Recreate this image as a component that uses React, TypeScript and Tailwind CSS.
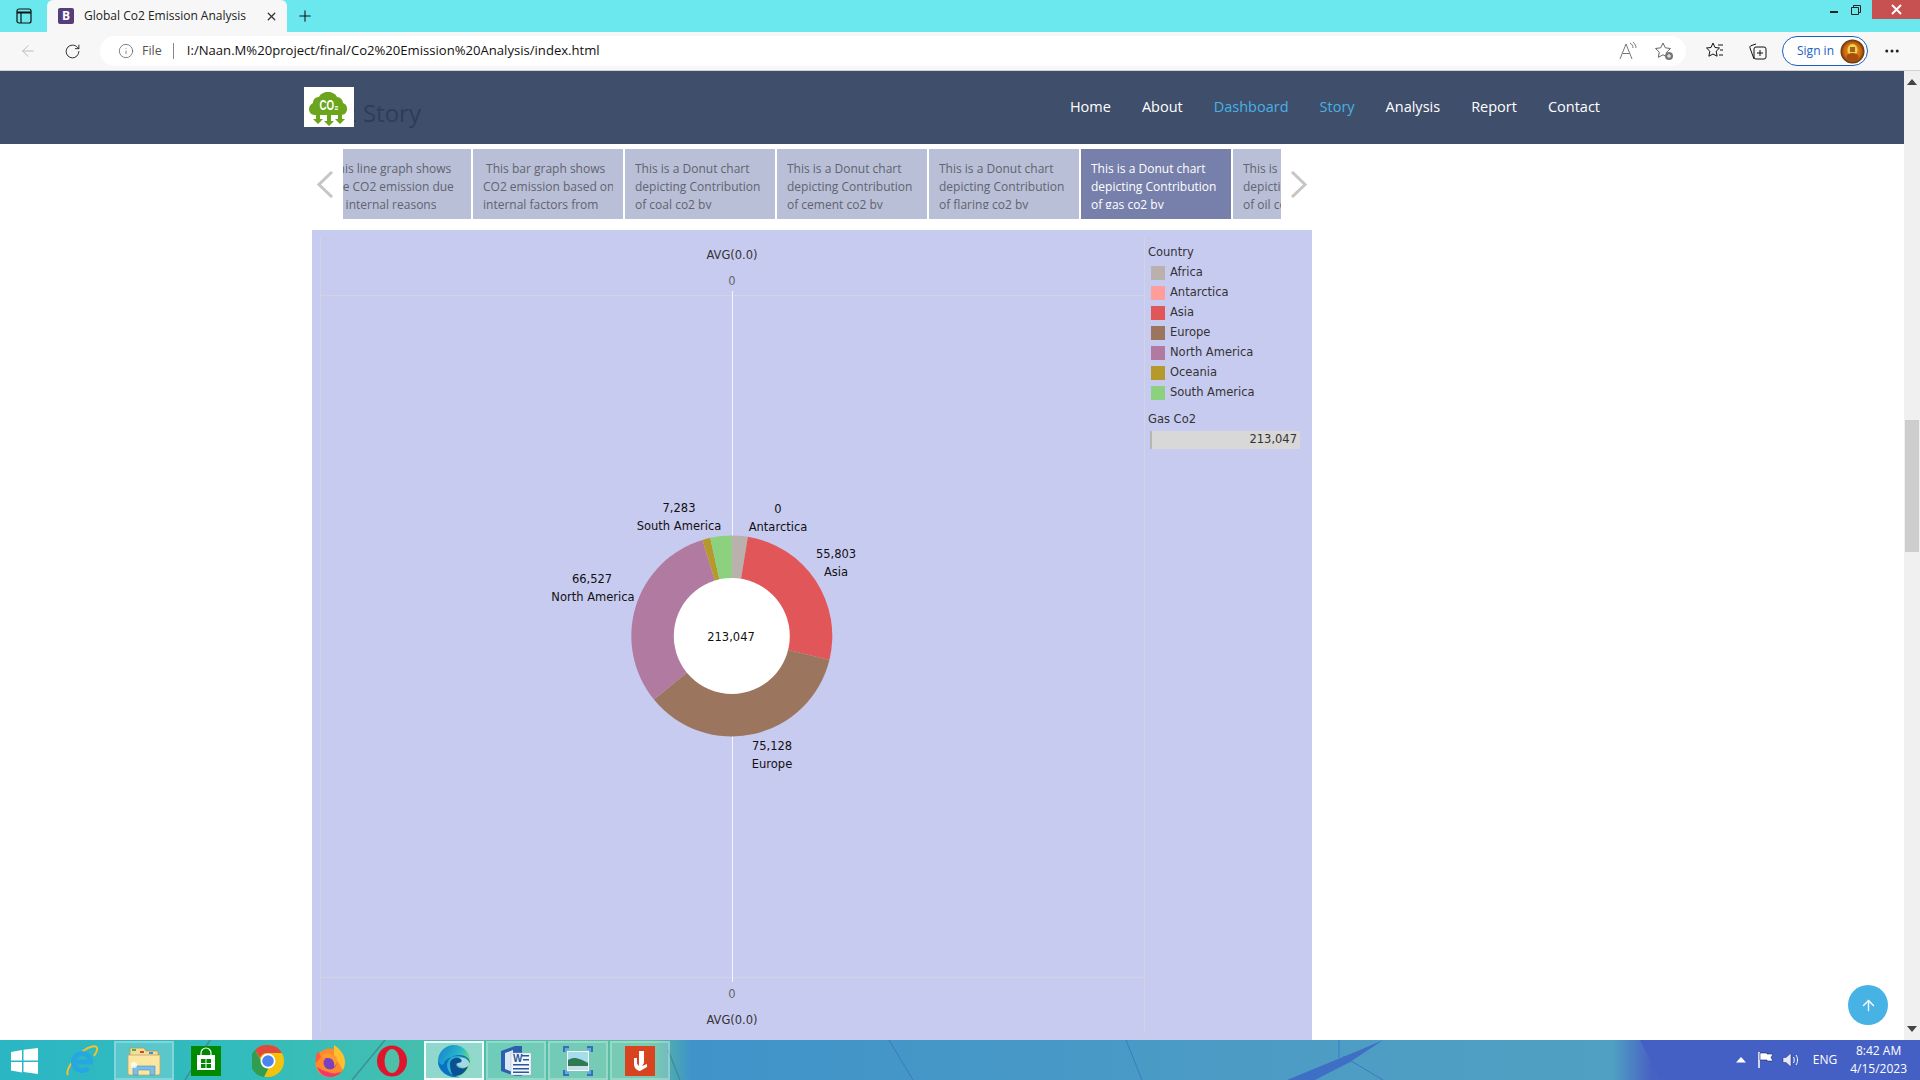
import { ArrowLeft, ArrowUp, Info, MoreHorizontal, Plus, RotateCw, X } from "lucide-react";

const NAV_LINKS = [
  { label: "Home" },
  { label: "About" },
  { label: "Dashboard", active: true },
  { label: "Story", active: true },
  { label: "Analysis" },
  { label: "Report" },
  { label: "Contact" },
];

const STORY_POINTS = [
  { lines: ["This line graph shows", "the CO2 emission due", "to internal reasons"] },
  { lines: ["\u00a0This bar graph shows", "CO2 emission based on", "internal factors from"] },
  { lines: ["This is a Donut chart", "depicting Contribution", "of coal co2 by"] },
  { lines: ["This is a Donut chart", "depicting Contribution", "of cement co2 by"] },
  { lines: ["This is a Donut chart", "depicting Contribution", "of flaring co2 by"] },
  { lines: ["This is a Donut chart", "depicting Contribution", "of gas co2 by"], active: true },
  { lines: ["This is a Donut chart", "depicting Contribution", "of oil co2 by"] },
];

const LEGEND = [
  { label: "Africa", swatch: "bg-[#bab0ac]" },
  { label: "Antarctica", swatch: "bg-[#ff9d9a]" },
  { label: "Asia", swatch: "bg-[#e15759]" },
  { label: "Europe", swatch: "bg-[#9c755f]" },
  { label: "North America", swatch: "bg-[#b07aa1]" },
  { label: "Oceania", swatch: "bg-[#b6992d]" },
  { label: "South America", swatch: "bg-[#8cd17d]" },
];

const SLICES = [
  { from: 0, to: 9.2, color: "#bab0ac" },
  { from: 9.2, to: 103.8, color: "#e15759" },
  { from: 103.8, to: 230.8, color: "#9c755f" },
  { from: 230.8, to: 343, color: "#b07aa1" },
  { from: 343, to: 347.6, color: "#b6992d" },
  { from: 347.6, to: 360, color: "#8cd17d" },
];

const CHART_LABELS = [
  { x: 679, y: 508, text: "7,283" },
  { x: 679, y: 526, text: "South America" },
  { x: 778, y: 509, text: "0" },
  { x: 778, y: 527, text: "Antarctica" },
  { x: 836, y: 554, text: "55,803" },
  { x: 836, y: 572, text: "Asia" },
  { x: 592, y: 579, text: "66,527" },
  { x: 593, y: 597, text: "North America" },
  { x: 731, y: 637, text: "213,047" },
  { x: 772, y: 746, text: "75,128" },
  { x: 772, y: 764, text: "Europe" },
];

function polar(cx: number, cy: number, r: number, deg: number) {
  const a = ((deg - 90) * Math.PI) / 180;
  return `${cx + r * Math.cos(a)} ${cy + r * Math.sin(a)}`;
}

function slicePath(from: number, to: number) {
  const large = to - from > 180 ? 1 : 0;
  return `M731.800 636 L${polar(731.8, 636, 100.5, from)} A100.500 100.500 0 ${large} 1 ${polar(731.8, 636, 100.5, to)} Z`;
}

function Co2Logo() {
  return (
    <svg width="50" height="40" viewBox="0 0 50 40" className="relative z-10 -mt-px shrink-0 bg-white">
      <path
        d="M11 28c-4 0-6-3-6-6 0-3 2-5 4-6 0-4 3-6 6-6 1-3 5-5 9-5 4 0 8 2 9 5 3 0 6 3 6 6 3 1 4 3 4 6 0 3-2 6-6 6z"
        fill="#6aa51b"
      />
      <text x="25" y="23" textAnchor="middle" fontSize="14" fontWeight="700" fill="#fff" fontFamily="Liberation Sans" textLength="19" lengthAdjust="spacingAndGlyphs">
        CO₂
      </text>
      <path d="M12 28h4v4h3l-5 5-5-5h3zM23 28h4v6h3l-5 5-5-5h3zM34 28h4v4h3l-5 5-5-5h3z" fill="#6aa51b" />
    </svg>
  );
}

function IeIcon() {
  return (
    <svg width="32" height="32" viewBox="0 0 32 32">
      <path d="M2 30C-1 26 8 12 17 6c7-5 13-6 14-3 1 2-1 5-3 8" fill="none" stroke="#f2c230" strokeWidth="2" />
      <path d="M8 17h16.500a8.500 8.500 0 1 0-2.500 6" fill="none" stroke="#27a7e0" strokeWidth="5" />
    </svg>
  );
}

function FolderIcon() {
  return (
    <svg width="34" height="30" viewBox="0 0 34 30">
      <path d="M3 2h14l2 3h12v6H3z" fill="#f3dd97" stroke="#b3975a" strokeWidth="0.8" />
      <rect x="5" y="3" width="4" height="2" fill="#4fae4a" />
      <rect x="13" y="5" width="4" height="2" fill="#d6472f" />
      <rect x="22" y="6" width="4" height="2" fill="#3f8fd8" />
      <path d="M1 9h32v18a2 2 0 0 1-2 2H3a2 2 0 0 1-2-2z" fill="#fbe7a2" stroke="#c2a464" strokeWidth="0.8" />
      <path d="M6 29v-9h22v9h-5v-5H11v5z" fill="#79bfe6" stroke="#4f8fc0" strokeWidth="0.6" />
      <circle cx="7" cy="19" r="3" fill="#fff" opacity="0.85" />
    </svg>
  );
}

function StoreIcon() {
  return (
    <svg width="30" height="30" viewBox="0 0 30 30">
      <rect width="30" height="30" fill="#008a00" />
      <path d="M10 10V7a5 5 0 0 1 10 0v3" fill="none" stroke="#fff" strokeWidth="1.2" />
      <path d="M6 9h18v15H6z" fill="#fff" />
      <path d="M10 13h4.500v4H10zM15.500 13H20v4h-4.500zM10 18h4.500v4H10zM15.500 18H20v4h-4.500z" fill="#008a00" />
    </svg>
  );
}

function ChromeIcon() {
  return (
    <svg width="32" height="32" viewBox="0 0 32 32">
      <circle cx="16" cy="16" r="16" fill="#f4c20d" />
      <path d="M16 0a16 16 0 0 1 14 8H16a8 8 0 0 0-8 5L3 5a16 16 0 0 1 13-5z" fill="#de4a3c" />
      <path d="M3 5l8 14a6 6 0 0 0 6 3l-5 10A16 16 0 0 1 3 5z" fill="#2f9e4f" />
      <circle cx="16" cy="16" r="7.500" fill="#fff" />
      <circle cx="16" cy="16" r="5.800" fill="#4a84ee" />
    </svg>
  );
}

function FirefoxIcon() {
  return (
    <svg width="32" height="32" viewBox="0 0 32 32">
      <circle cx="16" cy="18" r="14.500" fill="#ff8a2b" />
      <path d="M20 0c6 4 11 10 11 17 0 3-1 6-2 8L20 10z" fill="#ffc02e" />
      <path d="M4 6l3 6-5 6c-1-4 0-9 2-12z" fill="#ff5a3c" />
      <path d="M3 22c2 6 7 10 13 10 5 0 9-2 12-6-4 3-10 3-14 1-4-1-8-3-11-5z" fill="#f0386b" />
      <circle cx="16" cy="18" r="6.500" fill="#7b3fc4" />
      <path d="M8 11c4-4 12-3 15 2 1 5-2 8-3 9 1-4-1-9-6-9-2 0-4 0-6-2z" fill="#ff9a2e" />
    </svg>
  );
}

function OperaIcon() {
  return (
    <svg width="32" height="32" viewBox="0 0 32 32">
      <ellipse cx="16" cy="16" rx="15" ry="15.500" fill="#e0142b" />
      <ellipse cx="16" cy="16" rx="7.500" ry="12" fill="#4fc0a8" />
    </svg>
  );
}

function EdgeIcon() {
  return (
    <svg width="34" height="34" viewBox="0 0 34 34">
      <defs>
        <linearGradient id="edgeTop" x1="0" y1="0" x2="1" y2="0.600">
          <stop offset="0" stopColor="#0f7fd0" />
          <stop offset="0.600" stopColor="#2bb8c8" />
          <stop offset="1" stopColor="#7fe36a" />
        </linearGradient>
      </defs>
      <circle cx="17" cy="17" r="16" fill="url(#edgeTop)" />
      <path d="M33 19c0-5-5-8-11-8-7 0-12 5-12 10 0 7 6 12 13 12-11 2-22-6-22-16 2 5 6 4 6 2 3-8 22-10 26 0z" fill="#0b6fc2" />
      <path d="M13 20c0-5 5-7 9-6 4 1 3 5-1 5-3 0-2 4 2 5 3 1 6 0 8-2-2 6-7 10-13 10-4 0-5-8-5-12z" fill="#0d4f96" />
      <path d="M22 14c4 1 4 5 0 5-3 0-2 3 2 4 3 1 6 0 8-2 1-4-5-8-10-7z" fill="#a8d4ec" />
    </svg>
  );
}

function WordIcon() {
  return (
    <svg width="32" height="32" viewBox="0 0 32 32">
      <path d="M1 6l14-5h7v30h-7L1 26z" fill="#2c5fae" />
      <path d="M5 8l8-3v22l-8-3z" fill="#dce8f6" />
      <path d="M11 8h20v22H11z" fill="#f4f7fb" stroke="#a9b8cc" strokeWidth="0.5" />
      <text x="13" y="17" fontSize="10" fontWeight="700" fill="#2b579a" fontFamily="Liberation Sans">W</text>
      <path d="M22 10h7v1.500h-7zM23 14h6v1.500h-6zM13 19h16v1.500H13zM13 23h16v1.500H13zM13 26.500h16V28H13z" fill="#2b579a" />
    </svg>
  );
}

function PhotoIcon() {
  return (
    <svg width="30" height="30" viewBox="0 0 30 30">
      <path d="M0 0h6v2H2v4H0zM24 0h6v6h-2V2h-4zM0 24h2v4h4v2H0zM28 24h2v6h-6v-2h4z" fill="#2f74b8" />
      <path d="M2 2h4v2H4v2H2zM24 2h4v4h-2V4h-2zM2 24h2v2h2v2H2zM26 24h2v4h-4v-2h2z" fill="#6aa6d8" />
      <rect x="4" y="5" width="22" height="20" fill="#f6fbff" />
      <rect x="5" y="6" width="20" height="18" fill="#a6dcec" />
      <path d="M5 14c5-3 9-3 20 3v3H5z" fill="#2f7a52" />
      <path d="M5 20h20v4H5z" fill="#c9dfe8" />
    </svg>
  );
}

function RedAppIcon() {
  return (
    <svg width="30" height="30" viewBox="0 0 30 30">
      <rect width="30" height="30" fill="#d8441f" />
      <path d="M9 12h3v5c0 1 1 2 2 3V5h5v12l-2 3 5-2v3l-7 4h-1c-2-1-5-3-5-7z" fill="#fff" />
    </svg>
  );
}

function TaskTile({ children, state }: { children: React.ReactNode; state?: "open" | "active" }) {
  const style =
    state === "active"
      ? "border-2 border-white/90 bg-white/40"
      : state === "open"
        ? "border-2 border-white/25 bg-white/20"
        : "";
  return <div className={`flex h-[39px] w-[60px] items-center justify-center ${style}`}>{children}</div>;
}

function TitleBar() {
  return (
    <div className="flex h-8 shrink-0 items-start bg-[#6ae8ee]">
      <div className="flex h-8 w-[47px] items-center justify-center">
        <svg width="16" height="16" viewBox="0 0 16 16" fill="none" stroke="#111" strokeWidth="1.200">
          <rect x="1" y="1" width="14" height="14" rx="2" />
          <path d="M1 4.500h14" strokeWidth="2" />
          <path d="M5 4.500V15" />
        </svg>
      </div>
      <div className="flex h-8 w-[240px] items-center rounded-t-md bg-[#f7f7f7] pl-[11px] pr-2">
        <div className="flex h-4 w-4 items-center justify-center rounded-[2px] bg-[#563d7c] text-[12px] font-bold leading-none text-white">
          B
        </div>
        <span className="ml-[10px] flex-1 whitespace-nowrap text-[12px] text-[#222]">Global Co2 Emission Analysis</span>
        <X size={13} strokeWidth={2.4} className="mr-px text-[#333]" />
      </div>
      <div className="flex h-8 w-9 items-center justify-center">
        <Plus size={18} strokeWidth={1.4} className="text-[#111]" />
      </div>
      <div className="ml-auto flex h-[19px] shrink-0 items-stretch">
        <div className="flex w-[50px] items-center pl-[8px]">
          <div className="mt-[5px] h-[2px] w-2 bg-[#222]" />
          <svg width="10" height="10" viewBox="0 0 10 10" fill="none" stroke="#222" className="ml-[13px]">
            <path d="M.500 2.500h7v7h-7zM2.500 2.500V.500h7v7h-2" />
          </svg>
        </div>
        <div className="flex w-[48px] items-center justify-center bg-[#c75050]">
          <svg width="11" height="11" viewBox="0 0 11 11" fill="none" stroke="#fff" strokeWidth="2">
            <path d="m1 1 9 9M10 1l-9 9" />
          </svg>
        </div>
      </div>
    </div>
  );
}

function AddressBar() {
  return (
    <div className="flex h-[39px] shrink-0 items-center border-b border-[#d2d2d2] bg-[#f7f7f7]">
      <div className="flex w-[100px] items-center pl-[19px]">
        <ArrowLeft size={18} strokeWidth={1.2} className="text-[#b5b5b5]" />
        <RotateCw size={17} strokeWidth={1.3} className="ml-[27px] text-[#222]" />
      </div>
      <div className="flex h-[30px] w-[1586px] items-center rounded-full bg-white pl-[18px] pr-[12px]">
        <Info size={16} strokeWidth={1.2} className="text-[#666]" />
        <span className="ml-[8px] text-[12.500px] text-[#555]">File</span>
        <div className="ml-[11px] h-[16px] w-px bg-[#888]" />
        <span className="ml-[13px] whitespace-nowrap text-[13.100px] text-[#111]">
          I:/Naan.M%20project/final/Co2%20Emission%20Analysis/index.html
        </span>
        <div className="flex-1" />
        <svg width="22" height="20" viewBox="0 0 22 20" fill="none" stroke="#777" strokeWidth="1">
          <path d="M2 18 8 3l6 15M4.500 12.500h7" />
          <path d="M12 2c2 1 3 3 3 5M15 1c2 2 3 4 3 6" />
        </svg>
        <svg width="20" height="20" viewBox="0 0 20 20" className="ml-[14px]" fill="none" stroke="#666" strokeWidth="1">
          <path d="m9 2 2.300 4.800 5.200.7-3.800 3.600 1 5.200L9 13.800l-4.700 2.500 1-5.200L1.500 7.500l5.200-.7z" />
          <circle cx="15" cy="15" r="4" fill="#777" stroke="none" />
          <path d="M15 13v4M13 15h4" stroke="#fff" />
        </svg>
      </div>
      <svg width="20" height="20" viewBox="0 0 20 20" className="ml-[19px]" fill="none" stroke="#111" strokeWidth="1">
        <path d="m8 2 2 4.500 4.500.5-3.300 3.200.9 5L8 13l-4.100 2.200.9-5L1.500 7 6 6.500zM13 4h5M15 9h3M14 14h4" />
      </svg>
      <svg width="20" height="20" viewBox="0 0 20 20" className="ml-[23px]" fill="none" stroke="#111" strokeWidth="1">
        <path d="M6 18 2 7c-.4-1 .2-2 1-2.300L8 3" />
        <rect x="6" y="6" width="12" height="12" rx="2" />
        <path d="M12 9v6M9 12h6" />
      </svg>
      <div className="ml-[14px] flex h-[30px] w-[86px] items-center justify-between rounded-full border border-[#1a5fc4] bg-white pl-[14px] pr-[2px]">
        <span className="whitespace-nowrap text-[12px] text-[#1a5fc4]">Sign in</span>
        <svg width="25" height="25" viewBox="0 0 25 25">
          <defs>
            <radialGradient id="avatarGlow" cx="0.500" cy="0.500" r="0.550">
              <stop offset="0" stopColor="#f2a52a" />
              <stop offset="0.650" stopColor="#c9680f" />
              <stop offset="1" stopColor="#3a1c0a" />
            </radialGradient>
          </defs>
          <circle cx="12.500" cy="12.500" r="12" fill="url(#avatarGlow)" />
          <ellipse cx="12.500" cy="11" rx="5" ry="6" fill="#f6d04d" />
          <ellipse cx="12.500" cy="18" rx="6" ry="4" fill="#a84d10" />
          <path d="M10 8h5v5h-5z" fill="#7c3408" opacity="0.700" />
        </svg>
      </div>
      <MoreHorizontal size={18} className="ml-[15px] text-[#222]" />
    </div>
  );
}

function SiteNav() {
  return (
    <header className="flex h-[73px] items-center justify-between bg-[#3f4e6b] pl-[304px] pr-[304px] font-['Open_Sans',sans-serif]">
      <div className="flex items-center">
        <Co2Logo />
        <span className="-ml-[11px] mt-[11px] whitespace-nowrap text-[24px] leading-none text-[#2f3c58]">2 Story</span>
      </div>
      <nav className="flex items-center gap-[31px] text-[14.500px] leading-none">
        {NAV_LINKS.map((link) => (
          <a key={link.label} className={link.active ? "text-[#47b2e4]" : "text-white"}>
            {link.label}
          </a>
        ))}
      </nav>
    </header>
  );
}

function StoryCarousel() {
  return (
    <div className="flex h-[70px] items-center pl-[312px]">
      <div className="flex w-[31px] justify-center pr-[5px]">
        <svg width="17" height="27" viewBox="0 0 17 27" fill="none" stroke="#c6c6c6" strokeWidth="3">
          <path d="M15 1 2 13.500 15 26" />
        </svg>
      </div>
      <div className="w-[938px] overflow-hidden">
        <div className="-ml-[22px] flex gap-[2px]">
          {STORY_POINTS.map((point, i) => (
            <div
              key={i}
              className={`h-[70px] w-[150px] shrink-0 px-[10px] pt-[11px] ${
                point.active ? "bg-[#777fab] text-white" : "bg-[#b9bfd6] text-[#5f6470]"
              }`}
            >
              <div className="h-[49px] overflow-hidden text-[12px] leading-[18px]">
                {point.lines.map((line) => (
                  <div key={line} className="whitespace-nowrap">
                    {line}
                  </div>
                ))}
              </div>
            </div>
          ))}
        </div>
      </div>
      <div className="flex w-[31px] justify-center pl-[4px]">
        <svg width="17" height="27" viewBox="0 0 17 27" fill="none" stroke="#c6c6c6" strokeWidth="3">
          <path d="m2 1 13 12.500L2 26" />
        </svg>
      </div>
    </div>
  );
}

function DonutPlot() {
  return (
    <svg width="825" height="802" viewBox="320 238 825 802" className="shrink-0 text-[11.500px]">
      <path d="M320.500 238v795M1144.500 238v795M320 295.500h824M320 977.500h824" stroke="#d2d3e4" fill="none" />
      <path d="M732.500 291v691" stroke="#f4f5fc" fill="none" />
      {SLICES.map((s) => (
        <path key={s.color} d={slicePath(s.from, s.to)} fill={s.color} />
      ))}
      <circle cx="731.800" cy="636" r="58" fill="#fff" />
      <text x="732" y="255" textAnchor="middle" dominantBaseline="central" fill="#333">AVG(0.0)</text>
      <text x="732" y="281" textAnchor="middle" dominantBaseline="central" fill="#666">0</text>
      <text x="732" y="994" textAnchor="middle" dominantBaseline="central" fill="#666">0</text>
      <text x="732" y="1020" textAnchor="middle" dominantBaseline="central" fill="#333">AVG(0.0)</text>
      {CHART_LABELS.map((l) => (
        <text key={l.text} x={l.x} y={l.y} textAnchor="middle" dominantBaseline="central" fill="#111">
          {l.text}
        </text>
      ))}
    </svg>
  );
}

function ChartLegend() {
  return (
    <div className="flex-1 pl-[3px] pt-[5px] text-[11.500px] text-[#333]">
      <div className="mb-[2px] h-[18px] leading-[18px]">Country</div>
      {LEGEND.map((item) => (
        <div key={item.label} className="flex h-5 items-center pl-[3px]">
          <div className={`h-[14px] w-[14px] ${item.swatch}`} />
          <span className="ml-[5px] whitespace-nowrap">{item.label}</span>
        </div>
      ))}
      <div className="mt-[7px] h-[18px] leading-[18px]">Gas Co2</div>
      <div className="ml-[2px] mt-[3px] flex h-[18px] w-[150px] items-center justify-end border-l-2 border-[#b5b5b5] bg-[#d8d8d8] pr-[3px]">
        213,047
      </div>
    </div>
  );
}

function Taskbar() {
  return (
    <div className="relative flex h-10 shrink-0 items-center overflow-hidden bg-[linear-gradient(90deg,#2bb6c4_0%,#33bcbc_13%,#4cc0a8_26%,#58bda0_34%,#3f93c9_36%,#4a9ac6_60%,#50a0c2_84%,#4862c4_86%,#4560c4_100%)] font-['Open_Sans',sans-serif]">
      <svg width="1920" height="40" viewBox="0 0 1920 40" fill="none" className="absolute inset-0">
        <path d="M210 0 185 40M385 0 352 40M680 40 668 10" stroke="#3f8f93" strokeWidth="1.500" />
        <path d="M889 0 913 40M1126 0 1142 40M1339 0V18M1343 16 1383 40" stroke="#3f79c0" />
        <path d="M1287 40 1360 10 1383 0 1350 22 1315 40Z" fill="#3f6fc4" />
        <path d="M1640 0 1660 40H1920V0Z" fill="#4560c4" />
      </svg>
      <div className="relative flex h-full items-center pt-px">
        <div className="flex w-[52px] justify-center pr-[3px]">
          <svg width="27" height="26" viewBox="0 0 27 26" fill="#fff">
            <path d="M0 4l11-2v10.500H0zM12.500 1.700 27 0v12.500H12.500zM0 14h11v10.500l-11-2zM12.500 14H27v12l-14.500-2z" />
          </svg>
        </div>
        <div className="flex gap-[2px]">
          <TaskTile><IeIcon /></TaskTile>
          <TaskTile state="open"><FolderIcon /></TaskTile>
          <TaskTile><StoreIcon /></TaskTile>
          <TaskTile><ChromeIcon /></TaskTile>
          <TaskTile><FirefoxIcon /></TaskTile>
          <TaskTile><OperaIcon /></TaskTile>
          <TaskTile state="active"><EdgeIcon /></TaskTile>
          <TaskTile state="open"><WordIcon /></TaskTile>
          <TaskTile state="open"><PhotoIcon /></TaskTile>
          <TaskTile state="open"><RedAppIcon /></TaskTile>
        </div>
      </div>
      <div className="flex-1" />
      <div className="relative flex items-center pr-[13px] text-white">
        <svg width="10" height="6" viewBox="0 0 10 6" fill="#fff"><path d="M5 0l5 5.500H0z" /></svg>
        <svg width="18" height="18" viewBox="0 0 18 18" className="ml-[11px]">
          <path d="M2 1v16" stroke="#fff" strokeWidth="1.500" />
          <path d="M3 2h7v1h6l-2 3.500 2 3.500h-6v-1H3z" fill="#fff" stroke="#1d2a6b" strokeWidth="0.600" />
        </svg>
        <svg width="18" height="18" viewBox="0 0 18 18" className="ml-[7px]" fill="none" stroke="#fff">
          <path d="M1 6.500h3L9 2v14l-5-4.500H1z" fill="#e8e8f5" stroke="#1d2a6b" strokeWidth="0.500" />
          <path d="M11.500 6c1 2 1 4 0 6M14 4c2 3 2 7 0 10" />
        </svg>
        <span className="ml-[13px] text-[12px]">ENG</span>
        <div className="ml-[13px] flex flex-col items-center text-[12px] leading-[18px]">
          <span>8:42 AM</span>
          <span>4/15/2023</span>
        </div>
      </div>
    </div>
  );
}

export default function App() {
  return (
    <div className="flex h-screen w-screen flex-col overflow-hidden bg-white font-['Open_Sans',sans-serif]">
      <TitleBar />
      <AddressBar />
      <div className="relative flex min-h-0 flex-1">
        <div className="min-w-0 flex-1 overflow-hidden">
          <SiteNav />
          <div className="pt-[5px]">
            <StoryCarousel />
            <div className="ml-[312px] mt-[11px] flex h-[810px] w-[1000px] bg-[#c8cbf0] pl-2 pt-2 font-['DejaVu_Sans',sans-serif]">
              <DonutPlot />
              <ChartLegend />
            </div>
          </div>
        </div>
        <div className="flex w-4 shrink-0 flex-col items-center bg-[#f0f0f0]">
          <svg width="10" height="6" viewBox="0 0 10 6" className="mt-2" fill="#444"><path d="M5 0l5 6H0z" /></svg>
          <div className="mt-[335px] h-[132px] w-[14px] bg-[#cdcdcd]" />
          <div className="flex-1" />
          <svg width="10" height="6" viewBox="0 0 10 6" className="mb-2" fill="#444"><path d="M5 6 0 0h10z" /></svg>
        </div>
        <button className="absolute bottom-[15px] right-[32px] flex h-10 w-10 items-center justify-center rounded-full bg-[#47b2e4]">
          <ArrowUp size={17} strokeWidth={2} className="text-white" />
        </button>
      </div>
      <Taskbar />
    </div>
  );
}
